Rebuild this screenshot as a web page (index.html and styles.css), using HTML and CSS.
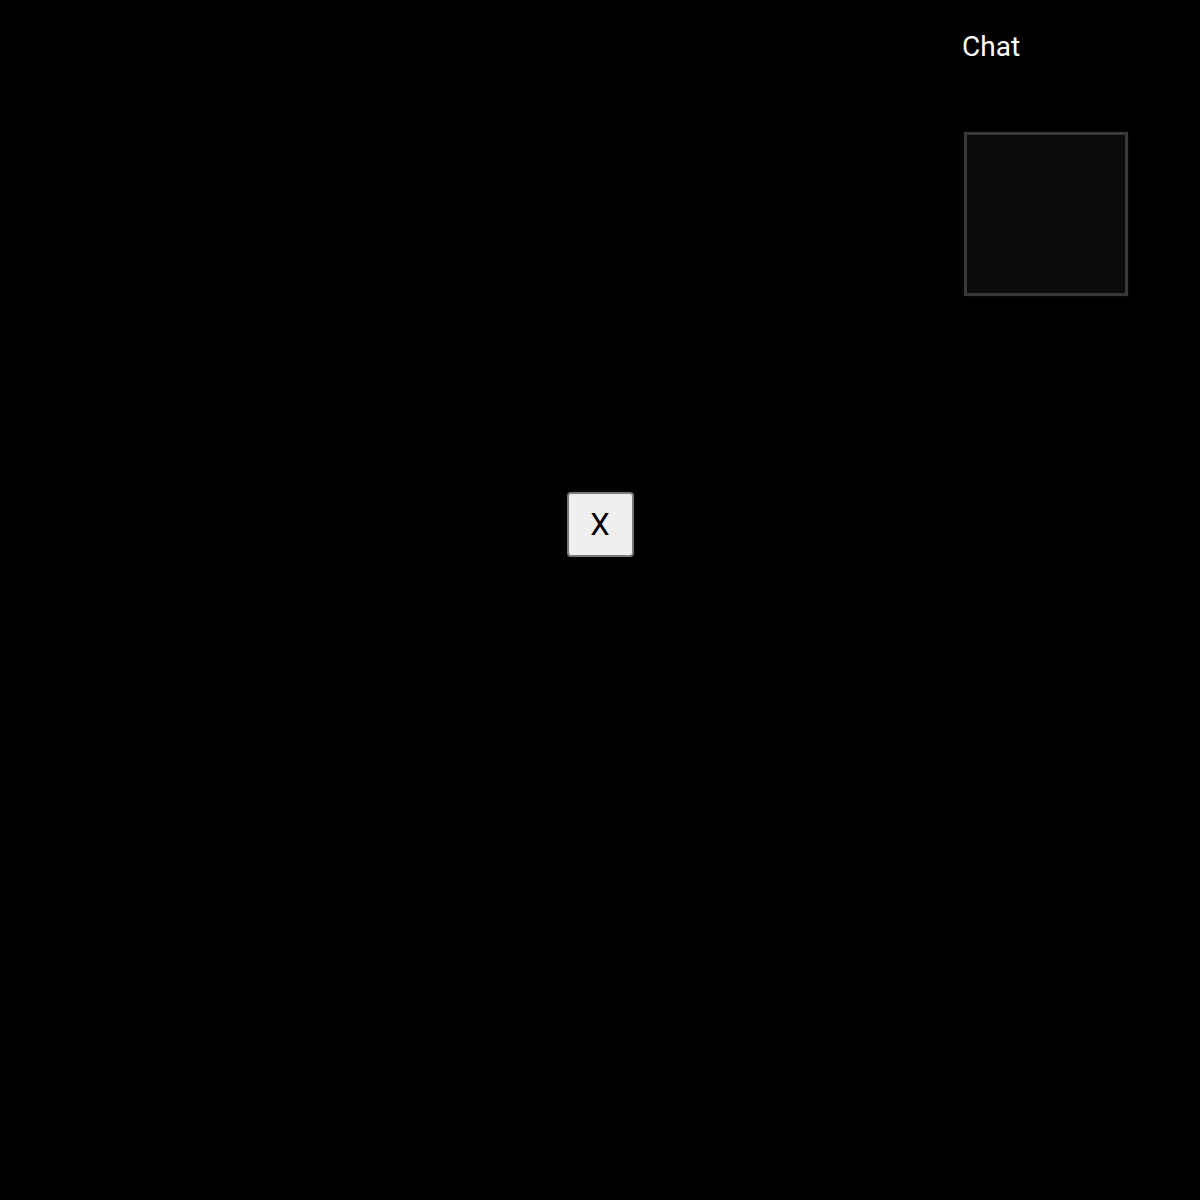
FILE: index.html
```html
<!DOCTYPE html>
<html lang="en">
<head>
<meta charset="utf-8">
<title>Chat</title>
<link rel="stylesheet" href="styles.css">
</head>
<body>
<main class="stage">
  <button class="close-btn" type="button">X</button>
</main>
<aside class="chat-panel">
  <h2 class="chat-title">Chat</h2>
  <div class="chat-box"></div>
</aside>
</body>
</html>
```
FILE: styles.css
```css
html, body {
  margin: 0;
  padding: 0;
  background: #000;
  height: 100%;
}
body {
  font-family: Roboto, "Liberation Sans", sans-serif;
  color: #fff;
  position: relative;
}
.stage {
  height: 1048px;
  display: flex;
  align-items: center;
  justify-content: center;
}
.close-btn {
  width: 67px;
  height: 65px;
  padding: 0;
  box-sizing: border-box;
  background: #efefef;
  border: 2px solid #7a7a7a;
  border-radius: 4px;
  color: #000;
  font-family: Roboto, "Liberation Sans", sans-serif;
  font-size: 31px;
  line-height: 1;
  display: flex;
  align-items: center;
  justify-content: center;
}
.chat-panel {
  position: absolute;
  top: 30px;
  left: 962px;
  display: flex;
  flex-direction: column;
}
.chat-title {
  margin: 0;
  font-size: 28px;
  font-weight: 400;
  line-height: 33px;
  color: #fff;
}
.chat-box {
  margin-top: 69px;
  margin-left: 2px;
  width: 164px;
  height: 164px;
  box-sizing: border-box;
  background: #0b0b0b;
  border: 3px solid #383838;
  box-shadow: 0 0 1px #2a2a2a;
}
```
